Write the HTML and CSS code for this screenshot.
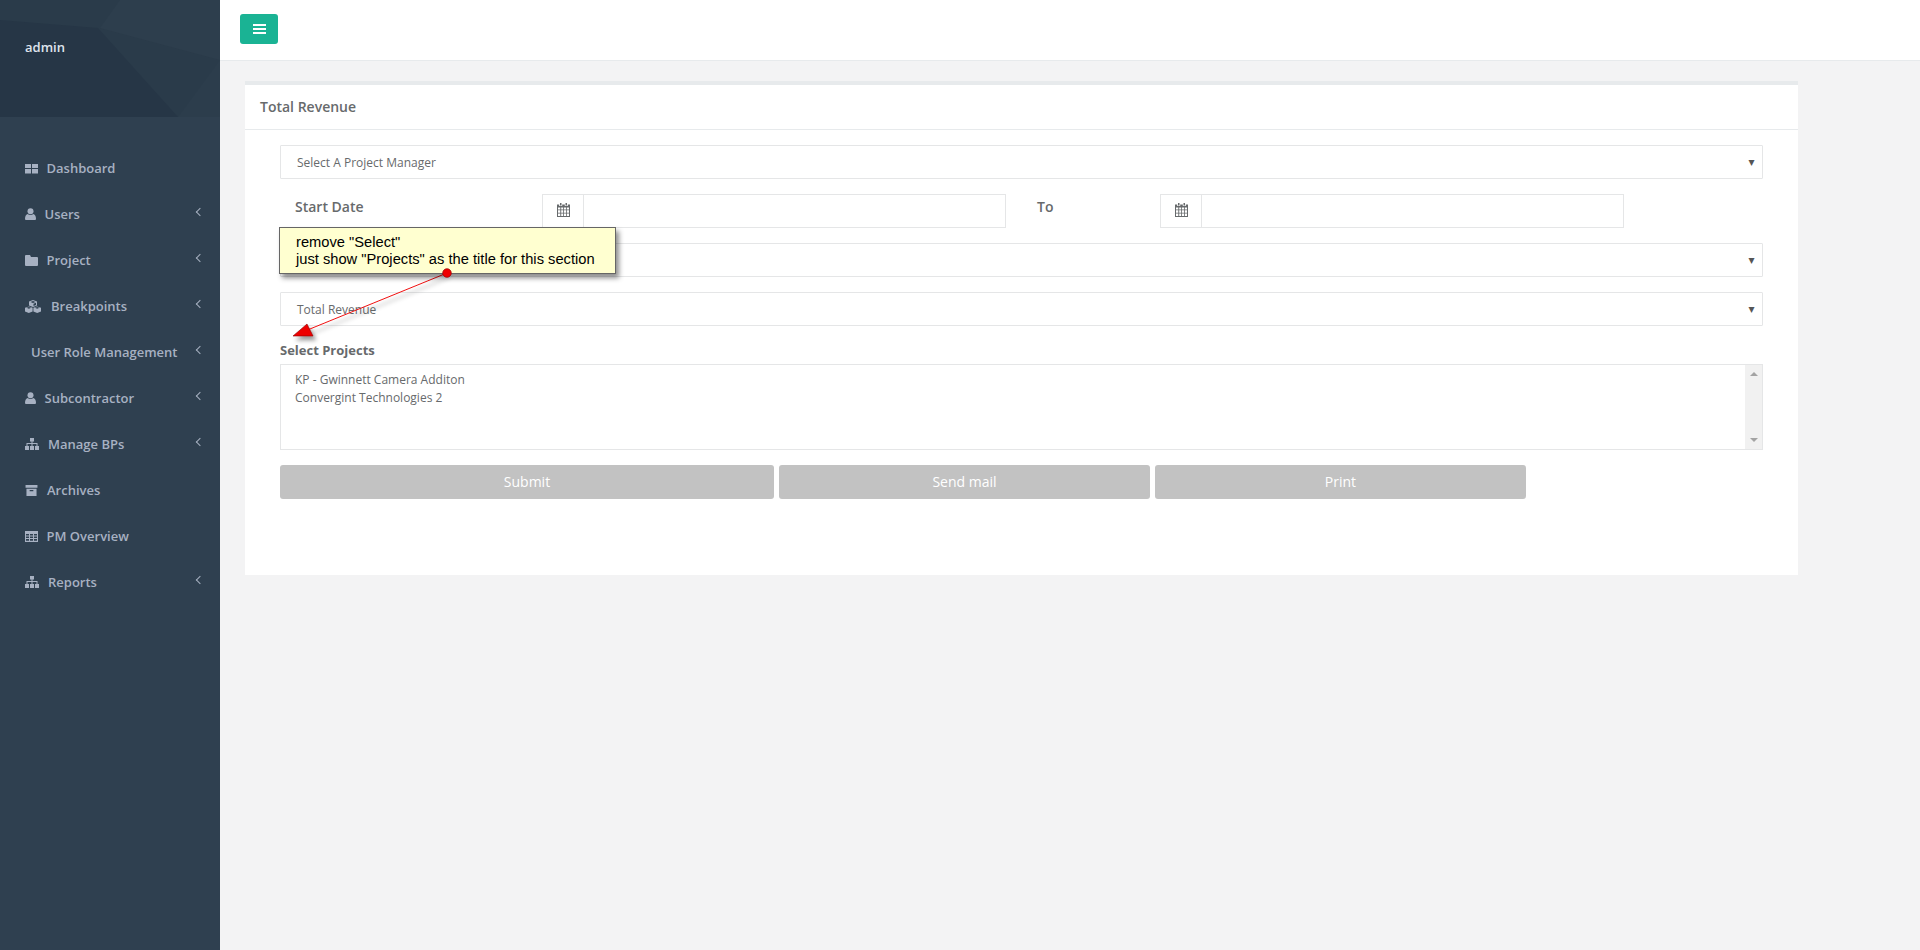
FILE: index.html
```html
<!DOCTYPE html>
<html lang="en">
<head>
<meta charset="utf-8">
<title>Total Revenue</title>
<link rel="stylesheet" href="styles.css">
</head>
<body>
<div class="app">
  <aside class="sidebar">
    <div class="side-head">
      <svg class="side-art" viewBox="0 0 220 117" preserveAspectRatio="none" aria-hidden="true">
        <polygon points="0,20 98,28 178,117 0,117" fill="#263646"/>
        <polygon points="100,28 120,0 220,0 220,60" fill="#2d3e4d"/>
        <polygon points="178,117 220,60 220,117" fill="#2c3d4c"/>
      </svg>
      <span class="side-user">admin</span>
    </div>
    <nav class="nav">
      <a class="nav-item"><svg class="ico gap-a" viewBox="0 0 13 11"><path d="M0 1h6v4H0zM7 1h6v4H7zM0 6h6v4.500H0zM7 6h6v4.500H7z"/></svg><span>Dashboard</span></a>
      <a class="nav-item"><svg class="ico gap-b" viewBox="0 0 11 12"><circle cx="5.500" cy="3.200" r="3"/><path d="M0 11q0 1 1 1h9q1 0 1-1 0-4-2.500-5Q5.500 8 2.500 6 0 7 0 11z"/></svg><span>Users</span><i class="chev"></i></a>
      <a class="nav-item"><svg class="ico gap-a" viewBox="0 0 13 11"><path d="M1 0h4l1 2h6q1 0 1 1v7q0 1-1 1H1q-1 0-1-1V1q0-1 1-1z"/></svg><span>Project</span><i class="chev"></i></a>
      <a class="nav-item"><svg class="ico ico-wide gap-c" viewBox="0 0 16 13"><path d="M8 0l4 1.500v4L8 7 4 5.500v-4zM5.500 2L8 3l2.500-1L8 1zM8.500 3.700v2.300l2.500-1V2.800zM4 6.500l3.600 1.300v3.700L3.800 13 0 11.500V7.800zM1.500 7.800l2.400 1 2.400-1-2.400-.9zM12 6.500l4 1.300v3.700L12.200 13l-3.800-1.500V7.800zM9.800 7.800l2.400 1 2.400-1-2.400-.9z" fill-rule="evenodd"/></svg><span>Breakpoints</span><i class="chev"></i></a>
      <a class="nav-item nav-plain"><span>User Role Management</span><i class="chev"></i></a>
      <a class="nav-item"><svg class="ico gap-b" viewBox="0 0 11 12"><circle cx="5.500" cy="3.200" r="3"/><path d="M0 11q0 1 1 1h9q1 0 1-1 0-4-2.500-5Q5.500 8 2.500 6 0 7 0 11z"/></svg><span>Subcontractor</span><i class="chev"></i></a>
      <a class="nav-item"><svg class="ico ico-tree gap-d" viewBox="0 0 14 12"><path d="M5 0h4v3.500H5zM6.500 3.500h1V5h-1zM1.500 5h11v1h-11zM1.500 6h1v2h-1zM6.500 6h1v2h-1zM11.500 6h1v2h-1zM0 8h4v4H0zM5 8h4v4H5zM10 8h4v4h-4z"/></svg><span>Manage BPs</span><i class="chev"></i></a>
      <a class="nav-item"><svg class="ico gap-d" viewBox="0 0 13 12"><path d="M0 0h13v3H0zM1 4h11v8H1zM4.500 5.500v1.200h4V5.500z" fill-rule="evenodd"/></svg><span>Archives</span></a>
      <a class="nav-item"><svg class="ico gap-a" viewBox="0 0 13 11"><path d="M0 0h13v11H0zM1 3v1.500h3V3zM5 3v1.500h3V3zM9 3v1.500h3V3zM1 5.500V7h3V5.500zM5 5.500V7h3V5.500zM9 5.500V7h3V5.500zM1 8v1.800h3V8zM5 8v1.800h3V8zM9 8v1.800h3V8z" fill-rule="evenodd"/></svg><span>PM Overview</span></a>
      <a class="nav-item"><svg class="ico ico-tree gap-d" viewBox="0 0 14 12"><path d="M5 0h4v3.500H5zM6.500 3.500h1V5h-1zM1.500 5h11v1h-11zM1.500 6h1v2h-1zM6.500 6h1v2h-1zM11.500 6h1v2h-1zM0 8h4v4H0zM5 8h4v4H5zM10 8h4v4h-4z"/></svg><span>Reports</span><i class="chev"></i></a>
    </nav>
  </aside>
  <main class="main">
    <header class="topbar">
      <button class="burger" type="button" aria-label="Menu"><span></span><span></span><span></span></button>
    </header>
    <div class="content">
      <section class="card">
        <h5 class="card-title">Total Revenue</h5>
        <div class="card-body">
          <div class="select"><span>Select A Project Manager</span><b class="caret">▾</b></div>
          <div class="date-row">
            <label class="date-label">Start Date</label>
            <div class="date-group"><span class="addon"><svg class="cal" viewBox="0 0 13 14"><path d="M3 0h1.500v2.500H3zM8.500 0H10v2.500H8.500zM0 1.500h2.200V3h3V1.500h2.600V3h3V1.500H13V14H0zM1 4.500v2h2.300v-2zM4.200 4.500v2h2v-2zM7 4.500v2h2v-2zM9.800 4.500v2H12v-2zM1 7.300v2.400h2.300V7.300zM4.200 7.300v2.400h2V7.300zM7 7.300v2.400h2V7.300zM9.800 7.300v2.400H12V7.300zM1 10.500V13h2.300v-2.500zM4.200 10.500V13h2v-2.500zM7 10.500V13h2v-2.500zM9.800 10.500V13H12v-2.500z" fill-rule="evenodd"/></svg></span><span class="date-input"></span></div>
            <label class="to-label">To</label>
            <div class="date-group"><span class="addon"><svg class="cal" viewBox="0 0 13 14"><path d="M3 0h1.500v2.500H3zM8.500 0H10v2.500H8.500zM0 1.500h2.200V3h3V1.500h2.600V3h3V1.500H13V14H0zM1 4.500v2h2.300v-2zM4.200 4.500v2h2v-2zM7 4.500v2h2v-2zM9.800 4.500v2H12v-2zM1 7.300v2.400h2.300V7.300zM4.200 7.300v2.400h2V7.300zM7 7.300v2.400h2V7.300zM9.800 7.300v2.400H12V7.300zM1 10.500V13h2.300v-2.500zM4.200 10.500V13h2v-2.500zM7 10.500V13h2v-2.500zM9.800 10.500V13H12v-2.500z" fill-rule="evenodd"/></svg></span><span class="date-input"></span></div>
          </div>
          <div class="select"><span></span><b class="caret">▾</b></div>
          <div class="select"><span>Total Revenue</span><b class="caret">▾</b></div>
          <div class="field-label">Select Projects</div>
          <div class="listbox">
            <ul class="options">
              <li>KP - Gwinnett Camera Additon</li>
              <li>Convergint Technologies 2</li>
            </ul>
            <div class="scroll"><i class="sc-up"></i><i class="sc-down"></i></div>
          </div>
          <div class="actions">
            <button class="btn btn-submit" type="button">Submit</button>
            <button class="btn btn-other" type="button">Send mail</button>
            <button class="btn btn-other" type="button">Print</button>
          </div>
        </div>
      </section>
    </div>
  </main>
</div>
<svg class="callout-arrow" viewBox="0 0 1920 950" aria-hidden="true">
  <defs><filter id="sh" x="-30%" y="-30%" width="180%" height="180%"><feDropShadow dx="3" dy="4" stdDeviation="2" flood-color="#000" flood-opacity=".4"/></filter></defs>
  <g filter="url(#sh)">
    <line x1="447" y1="273" x2="305" y2="331" stroke="#f01010" stroke-width="1"/>
    <polygon points="293,336 307,324 313,336" fill="#ee0000" stroke="#8a0000" stroke-width=".6"/>
  </g>
</svg>
<div class="callout">remove "Select"<br>just show "Projects" as the title for this section</div>
<svg class="callout-dot" viewBox="0 0 12 12" aria-hidden="true"><circle cx="6" cy="6" r="4.300" fill="#f00000" stroke="#900" stroke-width=".7"/></svg>
</body>
</html>
```
FILE: styles.css
```css
* { box-sizing: border-box; }
html, body { margin: 0; height: 100%; }
body { font-family: "Open Sans", sans-serif; font-size: 13px; color: #676a6c; background: #f3f3f4; overflow: hidden; }
.app { display: flex; height: 950px; }

.sidebar { width: 220px; flex: none; background: #2f4050; }
.side-head { position: relative; height: 117px; background: #2a3b4a; padding: 37px 25px 0; overflow: hidden; }
.side-art { position: absolute; inset: 0; width: 100%; height: 100%; }
.side-user { position: relative; color: #dfe4ed; font-weight: 600; font-size: 13px; line-height: 20px; }
.nav { padding-top: 28px; }
.nav-item { display: flex; align-items: center; height: 46px; padding: 0 25px; color: #a7b1c2; font-weight: 600; font-size: 13px; position: relative; }
.nav-plain { padding-left: 31px; }
.ico { width: 13px; height: 11px; fill: #a7b1c2; flex: none; }
.ico-wide { width: 16px; height: 13px; }
.ico-tree { width: 14px; height: 12px; }
.gap-a { margin-right: 8.500px; }
.gap-b { width: 11px; height: 12px; margin-right: 8.500px; }
.gap-c { margin-right: 10px; }
.gap-d { margin-right: 9px; }
.chev { position: absolute; left: 197px; top: 18px; width: 6px; height: 6px; border-left: 1.500px solid #a7b1c2; border-bottom: 1.500px solid #a7b1c2; transform: rotate(45deg); }

.main { flex: 1; min-width: 0; }
.topbar { height: 61px; background: #fff; border-bottom: 1px solid #e7eaec; padding: 14px 20px; }
.burger { display: flex; flex-direction: column; justify-content: center; gap: 2px; align-items: center; width: 38px; height: 30px; padding: 0; background: #1ab394; border: 0; border-radius: 3px; }
.burger span { display: block; width: 13px; height: 2px; background: #fff; }
.content { padding: 20px 122px 0 25px; }
.card { height: 494px; background: #fff; border-top: 4px solid #e7eaec; }
.card-title { margin: 0; height: 45px; padding: 12px 15px 0; font-size: 14px; line-height: 20px; font-weight: 600; color: #676a6c; border-bottom: 1px solid #e7eaec; }
.card-body { padding: 15px 35px 0; }
.select { display: flex; align-items: center; justify-content: space-between; height: 34px; padding: 0 7.500px 0 16px; border: 1px solid #e5e6e7; border-radius: 1px; font-size: 12px; color: #676a6c; margin-bottom: 15px; }
.caret { font-weight: 400; font-size: 12px; color: #555; font-family: "DejaVu Sans", sans-serif; }
.date-row { display: flex; height: 34px; margin-bottom: 15px; }
.date-label { width: 262px; padding: 3px 0 0 15px; font-size: 14px; line-height: 20px; font-weight: 600; }
.to-label { width: 154px; padding: 3px 0 0 31px; font-size: 14px; line-height: 20px; font-weight: 600; }
.date-group { display: flex; width: 464px; }
.addon { display: flex; align-items: center; justify-content: center; width: 42px; border: 1px solid #e5e6e7; flex: none; }
.date-input { flex: 1; border: 1px solid #e5e6e7; border-left: 0; }
.cal { width: 13px; height: 14px; fill: #676a6c; margin-top: -3px; }
.field-label { height: 23px; font-size: 13px; line-height: 18px; font-weight: 700; color: #676a6c; }
.listbox { display: flex; height: 86px; border: 1px solid #e5e6e7; }
.options { flex: 1; list-style: none; margin: 0; padding: 6px 14px; font-size: 12px; line-height: 18px; }
.scroll { position: relative; width: 17px; background: #f1f1f1; }
.sc-up, .sc-down { position: absolute; left: 4.500px; width: 0; height: 0; border-left: 4px solid transparent; border-right: 4px solid transparent; }
.sc-up { top: 7px; border-bottom: 4px solid #a3a3a3; }
.sc-down { bottom: 7px; border-top: 4px solid #a3a3a3; }
.actions { display: flex; gap: 5px; margin-top: 15px; }
.btn { height: 34px; padding: 0 0 2px; border: 0; border-radius: 3px; background: #c2c2c2; color: #fff; font: 400 14px "Open Sans", sans-serif; }
.btn-submit { width: 494px; }
.btn-other { width: 371px; }

.callout { position: absolute; left: 279px; top: 227px; width: 337px; height: 47px; padding: 6px 16px 0; background: #ffffd0; border: 1px solid #666; box-shadow: 3px 4px 5px rgba(0,0,0,.45); font: 14.700px/17px "Liberation Sans", sans-serif; color: #000; }
.callout-arrow { position: absolute; left: 0; top: 0; width: 1920px; height: 950px; pointer-events: none; }
.callout-dot { position: absolute; left: 441px; top: 267px; width: 12px; height: 12px; }
```
